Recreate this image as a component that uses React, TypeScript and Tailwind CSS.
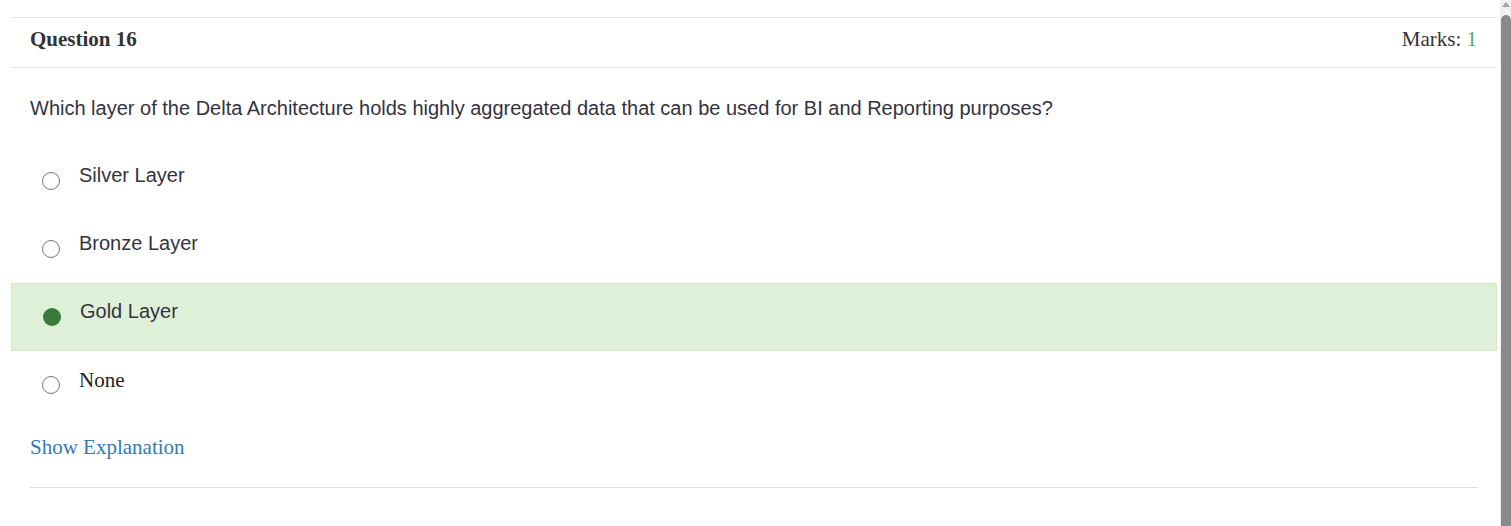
import React from 'react'

interface Option {
  id: number
  label: string
  serif?: boolean
  selected?: boolean
}

const options: Option[] = [
  { id: 1, label: 'Silver Layer' },
  { id: 2, label: 'Bronze Layer' },
  { id: 3, label: 'Gold Layer', selected: true },
  { id: 4, label: 'None', serif: true },
]

const Radio: React.FC<{ checked?: boolean }> = ({ checked }) =>
  checked ? (
    <span className="block w-[18px] h-[18px] rounded-full bg-[#3b7a3b]" />
  ) : (
    <span className="block w-[18px] h-[18px] rounded-full border border-[#767676] bg-white" />
  )

const App: React.FC = () => {
  return (
    <div className="flex w-[1511px] h-[526px] bg-white overflow-hidden">
      {/* Page content */}
      <div className="flex-1 pt-[17px] pl-[11px] pr-[3px]">
        <div className="border-t border-[#e5e5e5]">
          {/* Header */}
          <div className="h-[50px] flex items-start justify-between pt-[9px] pl-[19px] pr-[20px] border-b border-[#e8e8e8] font-['Liberation_Serif',serif] text-[21px] leading-[24px] text-[#333]">
            <span className="font-bold">Question 16</span>
            <span>
              Marks: <span className="text-[#4cae4c]">1</span>
            </span>
          </div>

          {/* Question */}
          <p className="pl-[19px] pt-[26px] pb-[25px] font-['Liberation_Sans',Arial,sans-serif] text-[20px] leading-[28px] text-[#33333f]">
            Which layer of the Delta Architecture holds highly aggregated data that can be used for BI and Reporting purposes?
          </p>

          {/* Options */}
          <div>
            {options.map((option) =>
              option.selected ? (
                <div
                  key={option.id}
                  className="h-[68px] flex items-center pl-[31px] bg-[#dff0d8] border border-[#d6e9c6]"
                >
                  <Radio checked />
                  <span className="ml-[19px] -mt-[12px] font-['Liberation_Sans',Arial,sans-serif] text-[20px] text-[#33333f]">
                    {option.label}
                  </span>
                </div>
              ) : (
                <div key={option.id} className="h-[68px] flex items-center pl-[31px]">
                  <Radio />
                  <span
                    className={
                      option.serif
                        ? "ml-[19px] -mt-[9px] font-['Liberation_Serif',serif] text-[21px] text-[#222]"
                        : "ml-[19px] -mt-[12px] font-['Liberation_Sans',Arial,sans-serif] text-[20px] text-[#33333f]"
                    }
                  >
                    {option.label}
                  </span>
                </div>
              )
            )}
          </div>

          {/* Explanation link */}
          <div className="mx-[19px] pt-[14px] pb-[26px] border-b border-[#e0e0e0]">
            <a href="#" className="font-['Liberation_Serif',serif] text-[21px] leading-[28px] text-[#337ab7]">
              Show Explanation
            </a>
          </div>
        </div>
      </div>

      {/* Scrollbar */}
      <div className="w-[11px] bg-[#f1f1f1] flex flex-col items-center">
        <svg className="w-[10px] h-[8px] mt-[1px]" viewBox="0 0 10 8">
          <path d="M1 6 L5 1 L9 6 Z" fill="#a3a3a3" />
        </svg>
        <div className="mt-[6px] w-[10px] flex-1 rounded-t-[5px] bg-[#8a8a8a]" />
      </div>
    </div>
  )
}

export default App
